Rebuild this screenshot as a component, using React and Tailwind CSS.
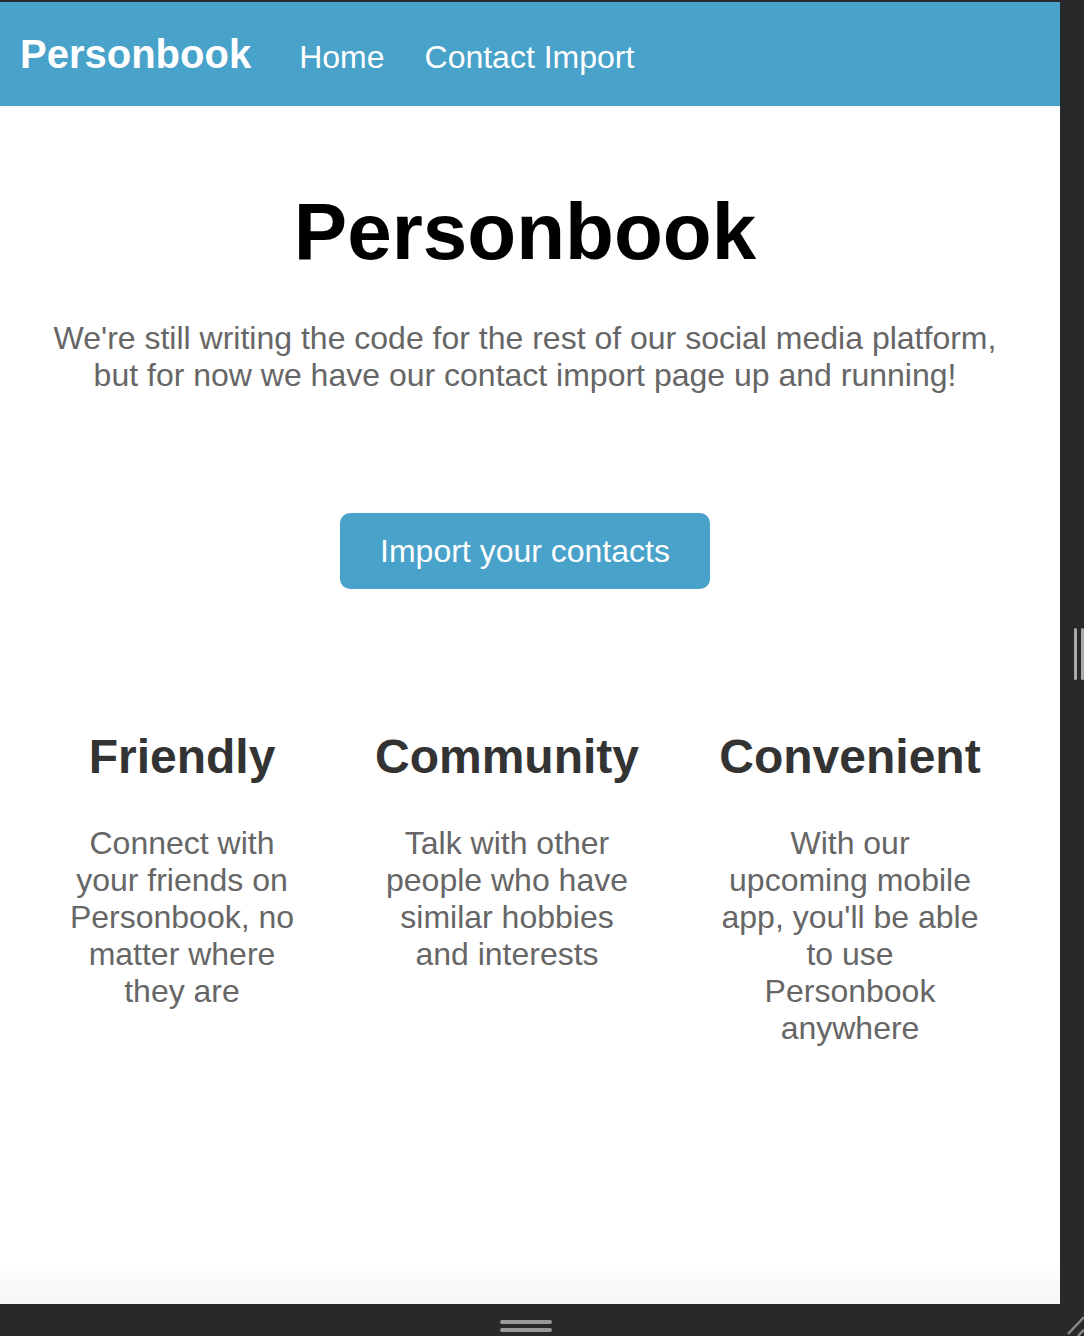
export default function App() {
  const font = "font-['Liberation_Sans',Arial,Helvetica,sans-serif]";
  return (
    <div className={`w-[1084px] h-[1336px] bg-[#28292b] flex flex-col overflow-hidden ${font}`}>
      <div className="h-[2px] shrink-0" />
      <div className="flex h-[1302px] shrink-0">
        <div className="w-[1060px] bg-white flex flex-col">
          <nav className="h-[104px] shrink-0 bg-[#48a2ca] flex items-center pl-[20px] text-white">
            <span className="text-[40px] leading-[46px] font-bold">Personbook</span>
            <span className="ml-[48px] mt-[6px] text-[32px] leading-[37px]">Home</span>
            <span className="ml-[40px] mt-[6px] text-[32px] leading-[37px]">Contact Import</span>
          </nav>
          <main className="w-[1050px] text-center pt-[80px]">
            <h1 className="text-[80px] leading-[92px] font-bold text-black">Personbook</h1>
            <p className="mt-[42px] px-[40px] text-[32px] leading-[37px] text-[#666666]">
              We're still writing the code for the rest of our social media platform, but for now we have our contact import page up and running!
            </p>
            <button className="mt-[119px] mx-auto flex items-center justify-center w-[370px] h-[76px] rounded-[10px] bg-[#48a2ca] text-white text-[32px] leading-[37px]">
              Import your contacts
            </button>
          </main>
          <section className="mt-[140px] flex items-start text-center">
            <div className="ml-[62px] w-[240px]">
              <h3 className="text-[48px] leading-[55px] font-bold text-[#333333]">Friendly</h3>
              <p className="mt-[41px] text-[32px] leading-[37px] text-[#666666]">
                Connect with your friends on Personbook, no matter where they are
              </p>
            </div>
            <div className="ml-[70px] w-[270px]">
              <h3 className="text-[48px] leading-[55px] font-bold text-[#333333]">Community</h3>
              <p className="mt-[41px] text-[32px] leading-[37px] text-[#666666]">
                Talk with other people who have similar hobbies and interests
              </p>
            </div>
            <div className="ml-[77px] w-[262px]">
              <h3 className="text-[48px] leading-[55px] font-bold text-[#333333]">Convenient</h3>
              <p className="mt-[41px] text-[32px] leading-[37px] text-[#666666]">
                With our upcoming mobile app, you'll be able to use Personbook anywhere
              </p>
            </div>
          </section>
          <div className="flex-1" />
          <div className="h-[40px] shrink-0 bg-gradient-to-b from-white to-[#f5f5f5]" />
        </div>
        <div className="w-[24px] pt-[626px] pl-[14px] flex gap-[4px]">
          <div className="w-[4px] h-[52px] rounded-full bg-[#a9a9a9]" />
          <div className="w-[4px] h-[52px] rounded-full bg-[#a9a9a9]" />
        </div>
      </div>
      <div className="h-[32px] shrink-0 flex">
        <div className="w-[1060px] pl-[500px] pt-[16px] flex flex-col gap-[4px]">
          <div className="w-[52px] h-[4px] rounded-full bg-[#999999]" />
          <div className="w-[52px] h-[4px] rounded-full bg-[#999999]" />
        </div>
        <div className="w-[24px]">
          <svg width="24" height="32" viewBox="0 0 24 32">
            <line x1="8" y1="30" x2="24" y2="13" stroke="#8a8a8a" strokeWidth="2.5" />
            <line x1="18" y1="32" x2="24" y2="25.5" stroke="#8a8a8a" strokeWidth="2.5" />
          </svg>
        </div>
      </div>
    </div>
  );
}
